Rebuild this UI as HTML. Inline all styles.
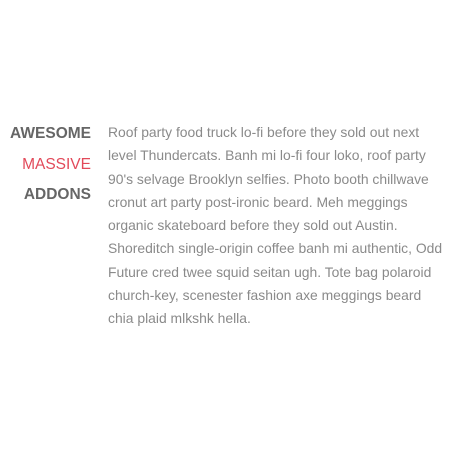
<!DOCTYPE html>
<html><head><style>
html,body{margin:0;background:#fff;width:460px;height:460px;overflow:hidden}
.h{position:absolute;right:369px;top:119px;text-align:right;font:bold 15.5px/30.5px "Liberation Sans",sans-serif;color:#666;letter-spacing:0}
.h .r{color:#e24a5a;font-weight:normal}
.p{position:absolute;left:108px;top:121px;width:350px;font:13.9px/23.25px "Liberation Sans",sans-serif;color:#8a8a8a;white-space:nowrap}
</style></head><body>
<div class="h">AWESOME<br><span class="r">MASSIVE</span><br>ADDONS</div>
<div class="p">Roof party food truck lo-fi before they sold out next<br>level Thundercats. Banh mi lo-fi four loko, roof party<br>90's selvage Brooklyn selfies. Photo booth chillwave<br>cronut art party post-ironic beard. Meh meggings<br>organic skateboard before they sold out Austin.<br>Shoreditch single-origin coffee banh mi authentic, Odd<br>Future cred twee squid seitan ugh. Tote bag polaroid<br>church-key, scenester fashion axe meggings beard<br>chia plaid mlkshk hella.</div>
</body></html>
